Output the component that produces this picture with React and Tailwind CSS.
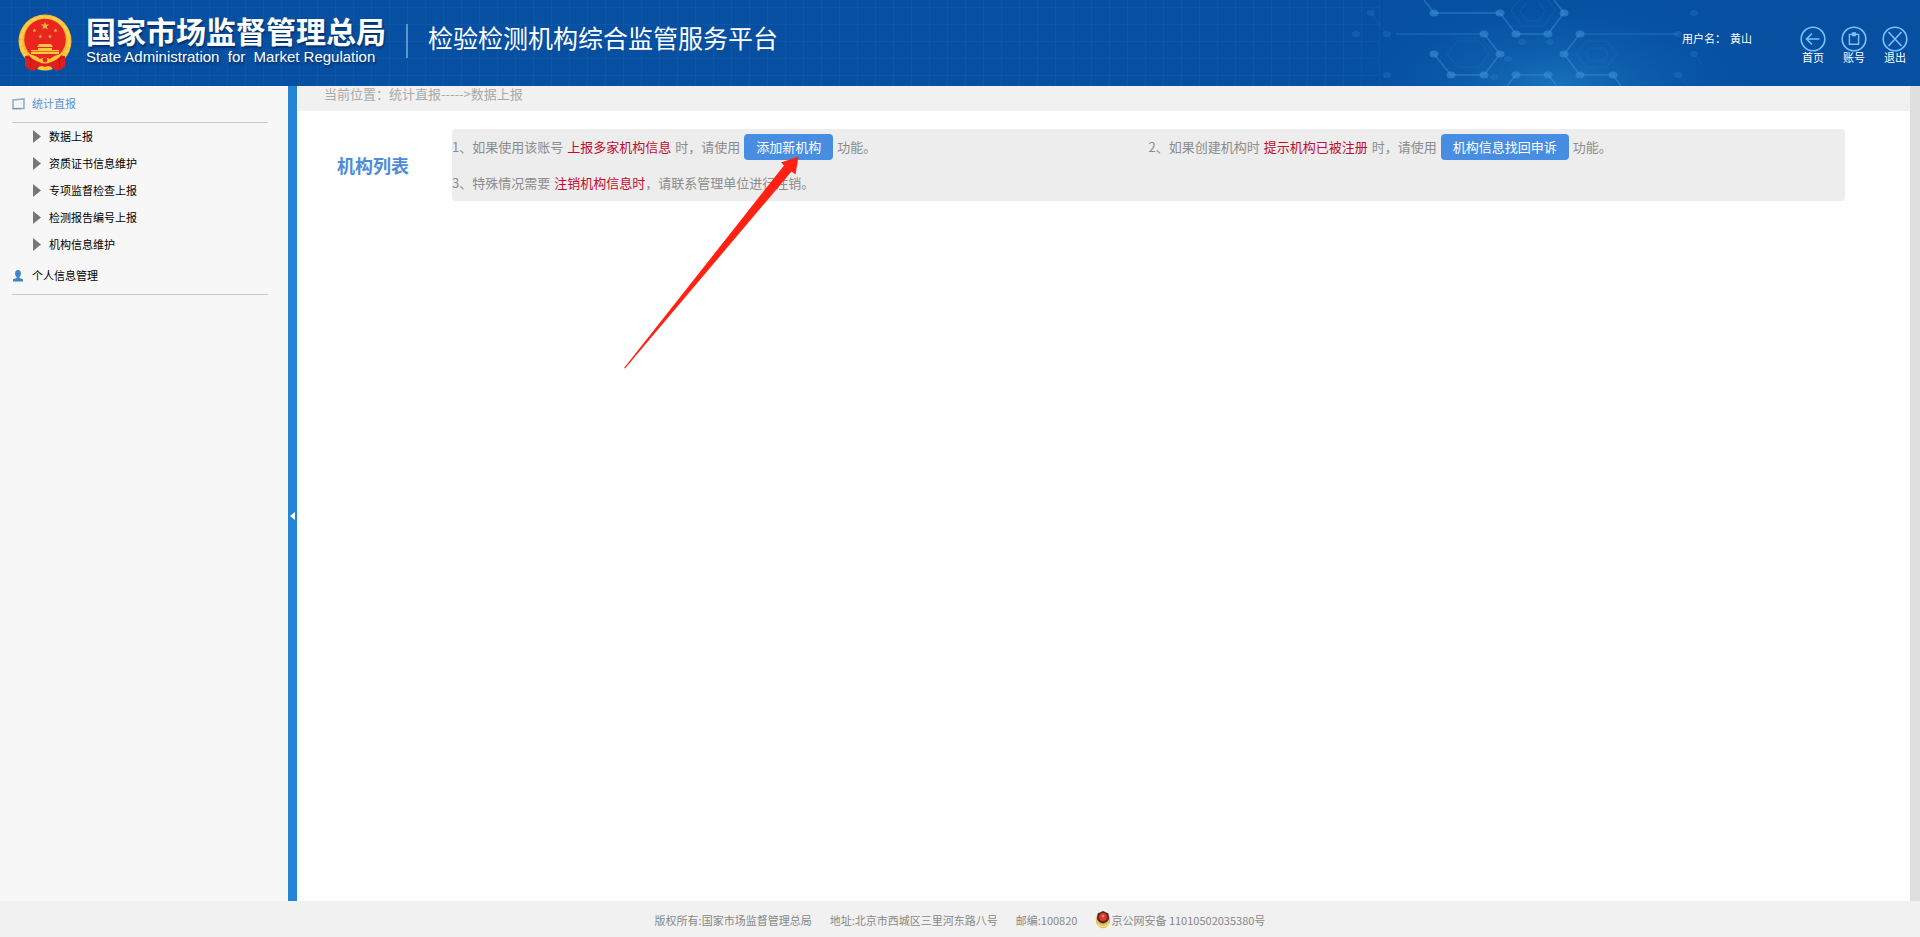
import React from "react";

const reportItems = [
  "数据上报",
  "资质证书信息维护",
  "专项监督检查上报",
  "检测报告编号上报",
  "机构信息维护",
];

const STAR =
  "M0 -1 L0.235 -0.324 L0.951 -0.309 L0.38 0.124 L0.588 0.809 L0 0.4 L-0.588 0.809 L-0.38 0.124 L-0.951 -0.309 L-0.235 -0.324 Z";

function Emblem() {
  return (
    <svg width="54" height="58" viewBox="0 0 54 58" aria-hidden="true">
      <circle cx="27" cy="27" r="26.5" fill="#f9b92d" />
      <circle cx="27" cy="27" r="24" fill="none" stroke="#ffcf4a" strokeWidth="3" strokeDasharray="6 1" />
      <path d="M7 42 L13 41 L20 45 L27 47 L34 45 L41 41 L47 42 L47 52 L44 55 L38 57 L34 53 L20 53 L16 57 L10 55 L7 52 Z" fill="#e01f1d" />
      <circle cx="27" cy="25.5" r="20.8" fill="#e8251f" />
      <g fill="#e9b23c">
        <path d={STAR} transform="translate(27 12) scale(4.6)" />
        <path d={STAR} transform="translate(16.5 16.5) scale(2.2)" />
        <path d={STAR} transform="translate(37.5 16.5) scale(2.2)" />
        <path d={STAR} transform="translate(22.3 22.5) scale(2.2)" />
        <path d={STAR} transform="translate(32 22.5) scale(2.2)" />
      </g>
      <g fill="#fdc840">
        <path d="M21 30 H33 L35 33 H19 Z" />
        <path d="M20 34 H34 V36 H41 V40 H13 V36 H20 Z" />
      </g>
      <path d="M13 37.5 H41" stroke="#e8251f" strokeWidth="0.6" />
      <path d="M10 40 Q18 41 22 45 Q27 42 32 45 Q36 41 44 40 Q40 46 33 48 Q27 51 21 48 Q14 46 10 40 Z" fill="#fbc637" />
      <circle cx="27" cy="46" r="2.4" fill="#e8251f" />
      <path d="M19 55 Q22 50 27 53 Q32 50 35 55 Q27 58 19 55 Z" fill="#fbc637" />
      <path d="M8 43 L13 45 L12 54 M46 43 L41 45 L42 54" stroke="#b91519" strokeWidth="1" fill="none" />
    </svg>
  );
}

const nodes = [
  [74, 13], [140, 13], [204, 13], [156, 34], [188, 34], [124, 34], [220, 34],
  [140, 54], [74, 54], [91, 75], [124, 75], [156, 75], [188, 75], [204, 54],
  [220, 75], [253, 75],
];
const faintNodes = [[11, 13], [27, 34], [27, 75], [318, 34], [318, 75], [334, 13], [334, 54], [-4, 34], [162, 42], [190, 42], [148, 59], [134, 77]];

function HeaderPattern() {
  return (
    <svg className="pointer-events-none absolute right-0 top-0" width="1920" height="86" aria-hidden="true">
      <defs>
        <pattern id="grid" width="18" height="17" patternUnits="userSpaceOnUse">
          <path d="M0 7.5 H18 M11.5 0 V17" stroke="#1c66b6" strokeWidth="1" opacity="0.28" />
        </pattern>
        <radialGradient id="glow">
          <stop offset="0" stopColor="#1873bd" />
          <stop offset="0.45" stopColor="#0f60b0" stopOpacity="0.6" />
          <stop offset="1" stopColor="#064fa1" stopOpacity="0" />
        </radialGradient>
      </defs>
      <rect width="1380" height="86" fill="url(#grid)" />
      <ellipse cx="1555" cy="86" rx="230" ry="105" fill="url(#glow)" />
      <g transform="translate(1360 0)" fill="none" stroke="#3f90d2" strokeWidth="1.5" opacity="0.5">
        <path d="M64 0 L74 13 H140 L156 34 H188 L204 13 L194 0" />
        <path d="M124 34 L140 54 L124 75 H91 L74 54" />
        <path d="M220 34 L204 54 L220 75 H253 L261 86" />
        <path d="M147 86 L156 75 H188 L197 86" />
      </g>
      <g transform="translate(1360 0)" fill="none" stroke="#3f90d2" strokeWidth="1.5" opacity="0.32">
        <path d="M36 34 H124 M220 34 H318" />
      </g>
      <g transform="translate(1360 0)" fill="none" stroke="#3f90d2" strokeWidth="1" opacity="0.16">
        <path d="M11 13 L27 34 M318 75 L328 86 M334 54 L342 64" />
        <path d="M98 41 H119 L129 54 L119 67 H98 L87 54 Z M95 38 H121 L134 54" />
        <path d="M226 41 H247 L257 54 L247 67 H226 L216 54 Z M230 48 H244 L248 54 L244 61 H230 L225 54 Z" />
        <path d="M160 0 L151 10 L162 26 H184 L195 10 L188 0 M166 3 L160 11 L167 21 H179 L185 11 L179 3" />
      </g>
      <g transform="translate(1360 0)" fill="#3a8fd3" opacity="0.6">
        {nodes.map(([x, y]) => (
          <ellipse key={`${x}-${y}`} cx={x} cy={y} rx="4.5" ry="3.5" />
        ))}
      </g>
      <g transform="translate(1360 0)" fill="#2b7fcb" opacity="0.3">
        {faintNodes.map(([x, y]) => (
          <ellipse key={`${x}-${y}`} cx={x} cy={y} rx="4" ry="3" />
        ))}
      </g>
    </svg>
  );
}

function HeaderLink({ label, children }) {
  return (
    <a href="#" className="flex flex-col items-center text-[11px] leading-3 text-white">
      <svg width="26" height="26" viewBox="0 0 26 26" fill="none" stroke="#7dc0ff" strokeWidth="1.6" aria-hidden="true">
        <circle cx="13" cy="13" r="11.8" />
        {children}
      </svg>
      <span>{label}</span>
    </a>
  );
}

function Header() {
  return (
    <header className="relative flex h-[86px] shrink-0 items-center overflow-hidden bg-[#064fa1] pl-[18px] pr-3 text-white">
      <HeaderPattern />
      <div className="relative flex flex-1 items-center">
        <Emblem />
        <div className="mb-1 ml-3.5 whitespace-nowrap [text-shadow:1px_2px_2px_#03306a]">
          <h1 className="text-[30px] font-bold leading-8">国家市场监督管理总局</h1>
          <p className="whitespace-pre text-[15px] leading-4">State Administration  for  Market Regulation</p>
        </div>
        <div className="mb-1 ml-5 h-[34px] w-0.5 bg-[#5c94cf]" />
        <h2 className="mb-2 ml-5 whitespace-nowrap text-[25px] leading-8">检验检测机构综合监管服务平台</h2>
      </div>
      <div className="relative flex items-center">
        <p className="mb-2 mr-12 flex gap-1 text-[11px] leading-4">
          <span>用户名：</span>
          <span>黄山</span>
        </p>
        <nav className="mt-1 flex gap-[15px]">
          <HeaderLink label="首页">
            <path d="M19.5 13 H6.5 M12 7.5 L6.5 13 L12 18.5" />
          </HeaderLink>
          <HeaderLink label="账号">
            <path d="M8.4 8.4 H17.6 V18.2 H8.4 Z M11 8.2 L11.6 7 H14.4 L15 8.2 L14.4 9.6 H11.6 Z" strokeWidth="1.4" />
          </HeaderLink>
          <HeaderLink label="退出">
            <path d="M6.5 6 L19.5 20 M19.5 6 L6.5 20" />
          </HeaderLink>
        </nav>
      </div>
    </header>
  );
}

function Sidebar() {
  return (
    <aside className="w-72 shrink-0 bg-[#f7f7f7] pl-3 pr-5 text-[11px] leading-4 text-black">
      <a href="#" className="flex h-[37px] items-center gap-[7px] border-b border-[#c8c8c8] text-[#5d92d6]">
        <svg width="13" height="12" viewBox="0 0 13 12" fill="none" aria-hidden="true">
          <path d="M1 2 L12 1 V10.5 H1 Z" fill="#f3f7fa" stroke="#8fb0c8" strokeWidth="1.6" />
          <path d="M0.5 10.8 H9" stroke="#6d94b4" />
        </svg>
        统计直报
      </a>
      <ul className="pl-[21px]">
        {reportItems.map((item) => (
          <li key={item}>
            <a href="#" className="flex h-[27px] items-center gap-2">
              <svg width="8" height="13" viewBox="0 0 8 13" aria-hidden="true">
                <path d="M0 0 L8 6.5 L0 13 Z" fill="#767676" />
              </svg>
              {item}
            </a>
          </li>
        ))}
      </ul>
      <a href="#" className="flex h-[37px] items-center gap-2 border-b border-[#c8c8c8]">
        <svg width="12" height="12" viewBox="0 0 12 12" fill="#3b86c8" aria-hidden="true">
          <ellipse cx="6" cy="3.6" rx="2.9" ry="3.5" />
          <path d="M4.6 6 H7.4 V8 L11 9.2 V11.5 H1 V9.2 L4.6 8 Z" />
        </svg>
        个人信息管理
      </a>
    </aside>
  );
}

function PointerArrow() {
  return (
    <svg
      className="pointer-events-none absolute left-[-124px] top-[18px] z-10"
      width="184"
      height="220"
      viewBox="0 0 184 220"
      aria-hidden="true"
    >
      <path d="M4 216 L164 13.5 L161 10.5 L178.5 4.5 L175.5 22.5 L171.5 19.5 L5 216.5 Z" fill="#ff2213" />
    </svg>
  );
}

function ActionButton({ children }) {
  return (
    <button type="button" className="h-[26px] rounded bg-[#478ee3] px-3 text-[13px] leading-6 text-white">
      {children}
    </button>
  );
}

function Notices() {
  return (
    <div className="grid flex-1 grid-cols-2 rounded bg-[#ededed] text-[13px] text-[#8c8c8c]">
      <p className="flex h-9 items-center gap-1 whitespace-nowrap">
        <span>1、如果使用该账号</span>
        <span className="text-[#c00d2d]">上报多家机构信息</span>
        <span>时，请使用</span>
        <span className="relative flex">
          <ActionButton>添加新机构</ActionButton>
          <PointerArrow />
        </span>
        <span>功能。</span>
      </p>
      <p className="flex h-9 items-center gap-1 whitespace-nowrap">
        <span>2、如果创建机构时</span>
        <span className="text-[#c00d2d]">提示机构已被注册</span>
        <span>时，请使用</span>
        <ActionButton>机构信息找回申诉</ActionButton>
        <span>功能。</span>
      </p>
      <p className="flex h-9 items-center whitespace-nowrap">
        <span className="mr-1">3、特殊情况需要</span>
        <span className="text-[#c00d2d]">注销机构信息时</span>
        <span>，请联系管理单位进行注销。</span>
      </p>
    </div>
  );
}

function PoliceBadge() {
  return (
    <svg width="16" height="18" viewBox="0 0 16 18" aria-hidden="true">
      <path d="M1 6 Q0 12 3 15 Q8 19.5 13 15 Q16 12 15 6 L12 3 H4 Z" fill="#e7bd55" />
      <path d="M2 13 Q8 18 14 13" fill="none" stroke="#f7dc87" strokeWidth="1.5" />
      <path d="M8 0 L13.5 2.5 L14 8 Q12 12 8 12.5 Q4 12 2 8 L2.5 2.5 Z" fill="#5a2537" />
      <circle cx="8" cy="6" r="3.9" fill="#e2391f" />
      <path d={STAR} transform="translate(8 5) scale(1.8)" fill="#f8b43c" />
    </svg>
  );
}

export default function App() {
  return (
    <div className="flex min-h-screen flex-col bg-white font-['Liberation_Sans','Noto_Sans_CJK_SC',sans-serif]">
      <Header />
      <div className="flex flex-1">
        <Sidebar />
        <button type="button" aria-label="收起菜单" className="flex w-[9px] shrink-0 items-center justify-center bg-[#2384d8] pt-11">
          <svg width="5" height="8" viewBox="0 0 5 8" aria-hidden="true">
            <path d="M5 0 V8 L0 4 Z" fill="#ffffff" />
          </svg>
        </button>
        <main className="min-w-0 flex-1 border-r-10 border-[#dfdfdf] font-['Noto_Sans_CJK_SC',sans-serif]">
          <p className="h-[25px] bg-[#f1f1f1] pl-[27px] text-[13px] leading-4 text-[#a9a9a9]">
            当前位置：统计直报-----&gt;数据上报
          </p>
          <section className="flex items-center pl-10 pr-[65px] pt-[18px]">
            <h3 className="w-[115px] shrink-0 text-lg font-bold leading-6 text-[#4f8cd8]">机构列表</h3>
            <Notices />
          </section>
        </main>
      </div>
      <footer className="flex h-9 shrink-0 items-center justify-center gap-[18px] bg-[#f1f1f1] pt-0.5 font-['Noto_Sans_CJK_SC',sans-serif] text-[11px] leading-4 text-[#888888]">
        <span>版权所有:国家市场监督管理总局</span>
        <span>地址:北京市西城区三里河东路八号</span>
        <span>邮编:100820</span>
        <a href="#" className="flex items-center">
          <PoliceBadge />
          京公网安备 11010502035380号
        </a>
      </footer>
    </div>
  );
}
